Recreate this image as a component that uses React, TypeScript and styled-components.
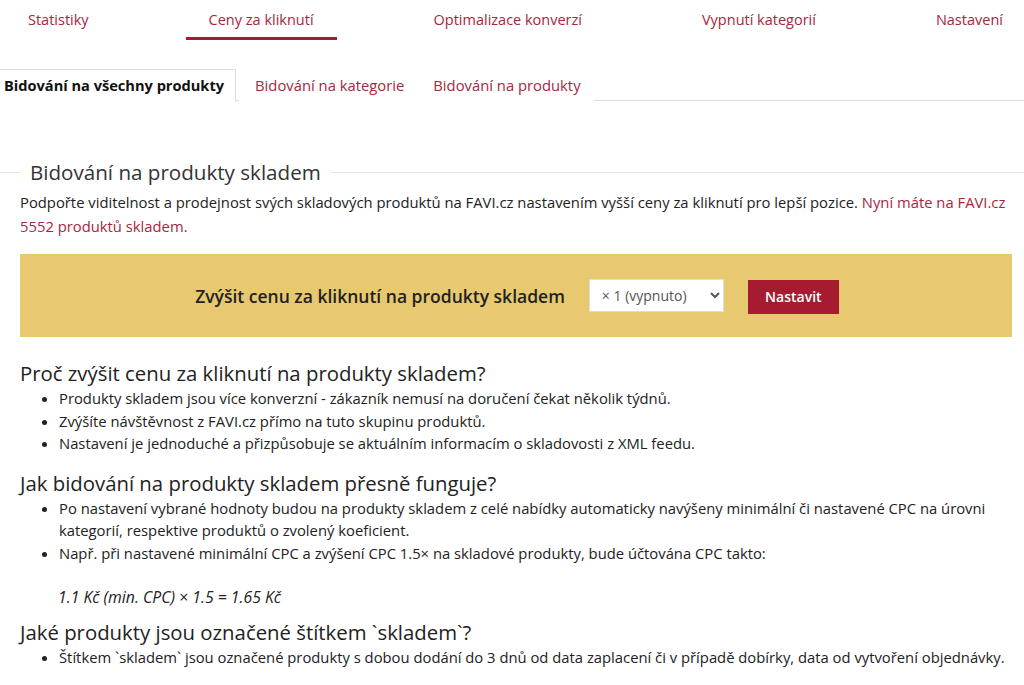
import React from "react";
import styled, { createGlobalStyle } from "styled-components";

const Global = createGlobalStyle`
  html, body { margin: 0; padding: 0; background: #fff; overflow: hidden; }
  body { font-family: "Open Sans", "Noto Sans", sans-serif; color: #222; font-size: 14px; }
  * { box-sizing: border-box; }
`;

const Page = styled.div`
  width: 1024px;
  overflow: hidden;
`;

const MainNav = styled.nav`
  display: flex;
  justify-content: space-between;
  width: 1021px;
  margin-left: 5px;
  height: 42px;
`;

const NavItem = styled.a<{ $active?: boolean }>`
  display: block;
  padding: 10px 23px 0;
  height: 40px;
  color: #a8263e;
  font-size: 14.5px;
  text-decoration: none;
  border-bottom: 3px solid ${(p) => (p.$active ? "#a51c30" : "transparent")};
`;

const SubTabs = styled.div`
  display: flex;
  margin-top: 27px;
  border-bottom: 1px solid #ddd;
  height: 32px;
`;

const SubTab = styled.a<{ $active?: boolean }>`
  display: block;
  padding: 5px 12px 0 15px;
  font-size: ${(p) => (p.$active ? "14.6px" : "14.8px")};
  text-decoration: none;
  color: ${(p) => (p.$active ? "#111" : "#a8263e")};
  font-weight: ${(p) => (p.$active ? 700 : 400)};
  background: #fff;
  border: 1px solid ${(p) => (p.$active ? "#ddd" : "transparent")};
  border-bottom: none;
  margin-bottom: -1px;
  height: 33px;
  &:first-child { padding-left: 4px; padding-right: 11px; margin-right: 3px; border-left: none; }
`;

const Fieldset = styled.section`
  margin-top: 57px;
`;

const Legend = styled.div`
  display: flex;
  align-items: center;
  gap: 10px;
  font-size: 20.6px;
  color: #333;
  height: 28px;
  &::before { content: ""; width: 20px; border-top: 1px solid #e3e3e3; }
  &::after { content: ""; flex: 1; border-top: 1px solid #e3e3e3; }
`;

const Content = styled.div`
  padding: 0 12px 0 20px;
`;

const Intro = styled.p`
  margin: 4px 0 0;
  font-size: 14.8px;
  line-height: 24px;
`;

const Link = styled.a`
  color: #a8263e;
  text-decoration: none;
`;

const Banner = styled.div`
  margin: 16px 0 22px;
  height: 83px;
  background: #e8c96f;
  display: flex;
  align-items: center;
  justify-content: center;
  padding-left: 2px;
`;

const BannerLabel = styled.span`
  font-size: 17.5px;
  font-weight: 600;
  color: #222;
  margin-right: 24px;
`;

const Select = styled.select`
  width: 135px;
  height: 33px;
  border: 1px solid #ddd;
  background: #fff;
  color: #555;
  font-family: inherit;
  font-size: 14px;
  padding: 0 8px;
  margin-right: 24px;
`;

const Button = styled.button`
  height: 34px;
  width: 91px;
  border: none;
  background: #a51c30;
  color: #fff;
  font-family: inherit;
  font-size: 14px;
  font-weight: 600;
  margin-top: 2px;
`;

const H3 = styled.h3`
  margin: 14px 0 0;
  font-size: 20.35px;
  font-weight: 400;
  line-height: 28px;
  color: #222;
`;

const List = styled.ul`
  margin: 0;
  padding-left: 39px;
  font-size: 14.8px;
  line-height: 22.5px;
`;

const Formula = styled.p`
  margin: 22px 0 -4px 38px;
  font-style: italic;
  font-size: 15.8px;
  line-height: 22px;
`;

export default function App() {
  return (
    <Page>
      <Global />
      <MainNav>
        <NavItem>Statistiky</NavItem>
        <NavItem $active>Ceny za kliknutí</NavItem>
        <NavItem>Optimalizace konverzí</NavItem>
        <NavItem>Vypnutí kategorií</NavItem>
        <NavItem>Nastavení</NavItem>
      </MainNav>
      <SubTabs>
        <SubTab $active>Bidování na všechny produkty</SubTab>
        <SubTab>Bidování na kategorie</SubTab>
        <SubTab>Bidování na produkty</SubTab>
      </SubTabs>
      <Fieldset>
        <Legend>Bidování na produkty skladem</Legend>
        <Content>
          <Intro>
            Podpořte viditelnost a prodejnost svých skladových produktů na FAVI.cz nastavením vyšší ceny za
            kliknutí pro lepší pozice. <Link>Nyní máte na FAVI.cz 5552 produktů skladem.</Link>
          </Intro>
          <Banner>
            <BannerLabel>Zvýšit cenu za kliknutí na produkty skladem</BannerLabel>
            <Select defaultValue="1">
              <option value="1">× 1 (vypnuto)</option>
              <option value="1.5">× 1.5</option>
            </Select>
            <Button>Nastavit</Button>
          </Banner>
          <H3>Proč zvýšit cenu za kliknutí na produkty skladem?</H3>
          <List>
            <li>Produkty skladem jsou více konverzní - zákazník nemusí na doručení čekat několik týdnů.</li>
            <li>Zvýšíte návštěvnost z FAVI.cz přímo na tuto skupinu produktů.</li>
            <li>Nastavení je jednoduché a přizpůsobuje se aktuálním informacím o skladovosti z XML feedu.</li>
          </List>
          <H3>Jak bidování na produkty skladem přesně funguje?</H3>
          <List>
            <li>
              Po nastavení vybrané hodnoty budou na produkty skladem z celé nabídky automaticky navýšeny minimální či
              nastavené CPC na úrovni kategorií, respektive produktů o zvolený koeficient.
            </li>
            <li>Např. při nastavené minimální CPC a zvýšení CPC 1.5× na skladové produkty, bude účtována CPC takto:</li>
          </List>
          <Formula>1.1 Kč (min. CPC) × 1.5 = 1.65 Kč</Formula>
          <H3>Jaké produkty jsou označené štítkem `skladem`?</H3>
          <List>
            <li>
              Štítkem `skladem` jsou označené produkty s dobou dodání do 3 dnů od data zaplacení či v případě dobírky,
              data od vytvoření objednávky.
            </li>
          </List>
        </Content>
      </Fieldset>
    </Page>
  );
}
